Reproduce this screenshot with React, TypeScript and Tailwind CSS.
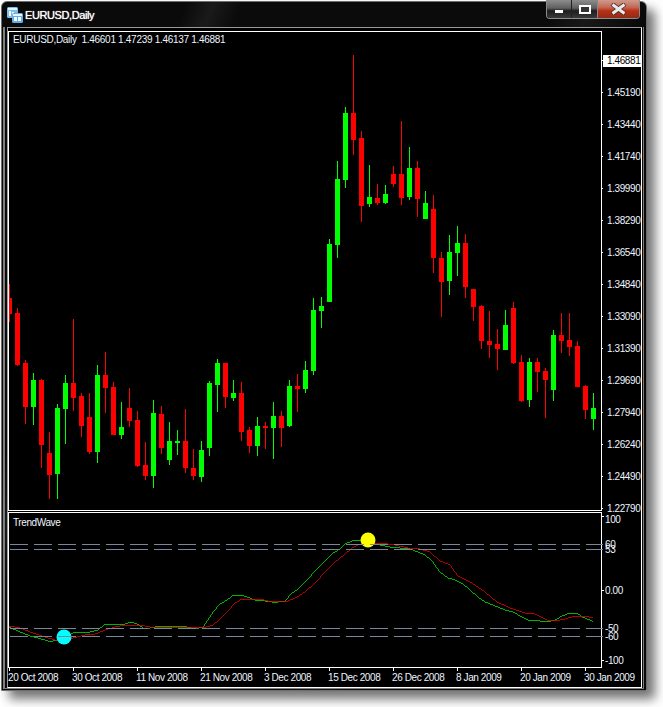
import React from "react";

type C = [number, number, number, number, "r" | "g"];
// high, body top, body bottom, low, colour — one bar every 8px from x=9
const candles: C[] = [
  [284,298,314,322,"r"],[308,313,365,366,"r"],[360,363,407,424,"r"],[373,380,407,425,"g"],[379,380,445,468,"r"],
  [432,453,475,499,"r"],[404,408,474,499,"g"],[375,383,409,444,"g"],[319,383,398,411,"r"],[393,396,426,437,"r"],
  [393,417,452,454,"r"],[365,375,452,463,"g"],[352,375,388,413,"r"],[382,387,435,435,"r"],[402,427,435,439,"g"],
  [388,408,421,427,"r"],[411,420,466,467,"r"],[442,465,476,480,"r"],[400,413,476,488,"g"],[406,414,448,454,"r"],
  [422,441,460,465,"g"],[430,441,443,455,"g"],[409,441,468,473,"r"],[449,468,476,480,"r"],[441,450,477,482,"g"],
  [381,383,448,456,"g"],[359,363,385,412,"g"],[363,363,397,408,"r"],[380,393,398,401,"g"],[382,393,432,441,"r"],
  [427,430,446,453,"r"],[417,426,446,456,"g"],[422,426,428,449,"r"],[402,416,428,459,"g"],[411,416,428,447,"r"],
  [380,386,426,427,"g"],[374,386,389,412,"r"],[361,370,389,393,"g"],[298,310,371,375,"g"],[297,306,311,328,"g"],
  [239,244,302,302,"g"],[161,179,245,258,"g"],[107,113,180,188,"g"],[55,113,140,155,"r"],[131,138,206,222,"r"],
  [165,197,204,207,"g"],[184,198,203,205,"r"],[185,194,203,204,"g"],[166,174,184,187,"r"],[121,174,198,205,"r"],
  [147,168,197,200,"g"],[161,168,199,217,"r"],[191,203,219,219,"g"],[195,209,258,273,"r"],[252,258,282,317,"r"],
  [235,252,281,295,"g"],[226,243,253,276,"g"],[234,243,287,298,"r"],[289,289,307,321,"r"],[305,306,341,349,"r"],
  [311,341,345,358,"r"],[329,344,349,370,"r"],[310,325,350,350,"g"],[302,308,363,364,"r"],[355,362,401,402,"r"],
  [358,362,400,407,"g"],[358,362,372,392,"r"],[368,371,380,418,"r"],[330,335,390,401,"g"],[313,335,341,353,"r"],
  [313,340,347,356,"r"],[341,346,387,387,"r"],[385,386,410,419,"r"],[393,408,419,430,"g"],
];

const prices = ["1.46881","1.45190","1.43440","1.41740","1.39990","1.38290","1.36540","1.34840","1.33090","1.31390","1.29690","1.27940","1.26240","1.24490","1.22790"];
const dates = ["20 Oct 2008","30 Oct 2008","11 Nov 2008","21 Nov 2008","3 Dec 2008","15 Dec 2008","26 Dec 2008","8 Jan 2009","20 Jan 2009","30 Jan 2009"];

const green = "9,627 20,632 30,636 45,640 50,642 60,639 73,633 90,632 98,630 105,624 125,624 130,622 137,624 145,629 155,627 175,626 187,627 195,629 203,627 213,612 220,604 227,600 232,596 240,595 247,597 255,600 265,601 272,602 278,602 285,601 292,593 298,589 307,580 315,571 325,561 333,553 340,549 345,544 352,541 358,540 365,542 380,545 390,547 400,548 410,549 418,552 425,555 432,561 440,572 448,578 455,580 463,584 470,590 478,597 485,602 495,606 505,610 513,612 520,616 528,620 540,621 547,622 555,620 562,616 570,613 577,613 582,617 590,620 593,622";
const red = "9,626 20,628 30,632 45,637 55,640 65,640 73,638 85,635 95,634 105,630 115,627 125,625 140,625 150,627 165,628 175,627 190,627 203,628 213,625 220,619 227,612 235,603 242,599 260,599 268,601 280,602 288,601 297,597 305,592 315,583 325,572 335,562 345,554 352,548 358,545 366,543 380,543 395,545 408,548 420,549 430,552 440,561 450,565 458,576 470,582 485,592 497,602 510,608 525,613 535,614 547,620 555,621 565,619 575,616 585,616 593,618";

const levels: [string, number, boolean][] = [
  ["100", 519, true],["60", 544, false],["53", 549, false],["0.00", 590, true],["-50", 628, false],["-60", 636, false],["-100", 660, true],
];

function AppIcon() {
  return (
    <svg width="16" height="16" viewBox="0 0 16 16" className="shrink-0">
      <rect x="0" y="0" width="11" height="11" rx="1.5" fill="#7cc0f2" />
      <rect x="1" y="1" width="9" height="2" fill="#e3f3ff" />
      <rect x="2" y="4" width="2" height="5" fill="#ffffff" />
      <rect x="5" y="5" width="2" height="4" fill="#ffffff" />
      <rect x="5" y="6" width="11" height="10" rx="1.5" fill="#5eaeee" />
      <rect x="6" y="7" width="9" height="2" fill="#eaf6ff" />
      <rect x="7" y="10" width="3" height="4" fill="#ffffff" />
      <rect x="11" y="10" width="3" height="4" fill="#ffffff" />
    </svg>
  );
}

function PricePanel() {
  return (
    <svg width="592" height="478" viewBox="9 32 592 478" shapeRendering="crispEdges" className="block">
      {candles.map(([hi, top, bot, lo, col], i) => {
        const cx = 9 + i * 8;
        const fill = col === "g" ? "#00ff00" : "#ff0000";
        return (
          <g key={i} fill={fill}>
            <rect x={cx} y={hi} width="1" height={lo - hi} />
            <rect x={cx - 2} y={top} width="5" height={bot - top} />
          </g>
        );
      })}
    </svg>
  );
}

function WavePanel() {
  const dash = "18 6";
  return (
    <svg width="592" height="154" viewBox="9 513 592 154" className="block overflow-visible">
      <g fill="none" strokeWidth="0.7" shapeRendering="crispEdges">
        <polyline points={green} stroke="#00ff00" />
        <polyline points={red} stroke="#ff0000" />
      </g>
      <circle cx="64" cy="637" r="7.5" fill="#00ffff" />
      <circle cx="368" cy="540" r="7.5" fill="#ffff00" />
      <g stroke="#77889a" strokeWidth="1" strokeDasharray={dash} shapeRendering="crispEdges">
        {[544.5, 549.5, 628.5, 636.5].map((y) => (
          <line key={y} x1="10" y1={y} x2="603" y2={y} />
        ))}
      </g>
    </svg>
  );
}

export default function App() {
  return (
    <div className="w-[663px] h-[707px] bg-white overflow-hidden pt-[1px] pl-[1px] font-['Liberation_Sans',Arial,sans-serif] text-[10px] leading-[12px] tracking-[-0.4px] text-[#eef5ff]">
      <div className="w-[646px] h-[690px] flex flex-col rounded-t-[6px] border border-[#6e6e6e] bg-[linear-gradient(112deg,#0a0a0a_0%,#0a0a0a_20%,#1a1a1a_23%,#0b0b0b_26%,#0b0b0b_60%,#181818_64%,#0a0a0a_70%)] pb-[1px] shadow-[8px_8px_11px_rgba(0,0,0,0.55)]">
        {/* title bar */}
        <div className="h-[25px] shrink-0 flex items-start justify-between pl-[5px] pr-[6px]">
          <div className="flex items-center gap-[2px] pt-[5px]">
            <AppIcon />
            <span className="text-[11px] leading-[16px] tracking-[-0.4px] text-white [text-shadow:0_0_1px_#ffffff]">EURUSD,Daily</span>
          </div>
          <div className="flex h-[19px] -mt-[2px] rounded-b-[4px] border border-t-0 border-[#8c8c8c] overflow-hidden">
            <div className="w-[25px] flex items-center justify-center border-r border-[#222] bg-[linear-gradient(180deg,#8d8d8d_0%,#5f5f5f_45%,#1e1e1e_60%,#3a3a3a_100%)]">
              <div className="w-[8px] h-[3px] mt-[5px] bg-white" />
            </div>
            <div className="w-[26px] flex items-center justify-center border-r border-[#888] bg-[linear-gradient(180deg,#8d8d8d_0%,#5f5f5f_45%,#1e1e1e_60%,#3a3a3a_100%)]">
              <div className="w-[12px] h-[9px] border-2 border-white bg-[#333]" />
            </div>
            <div className="w-[41px] flex items-center justify-center bg-[linear-gradient(180deg,#cf9a8c_0%,#c26a56_40%,#bb2f14_60%,#8f2c1a_100%)]">
              <svg width="17" height="12" viewBox="0 0 17 12">
                <path d="M2 1 L15 11 M15 1 L2 11" stroke="#4a2a24" strokeWidth="4.6" fill="none" />
                <path d="M2.5 1.5 L14.5 10.5 M14.5 1.5 L2.5 10.5" stroke="#e8e8e8" strokeWidth="3" fill="none" />
              </svg>
            </div>
          </div>
        </div>
        {/* frame */}
        <div className="flex-1 min-h-0 ml-[1px] mr-[2px] border-l-2 border-r border-b border-[#7f7f7f] pl-[2px] pr-[1px]">
          <div className="h-full border border-[#9a9a9a] border-r-white border-b-white bg-black pt-[3px]">
            {/* main row */}
            <div className="flex h-[480px]">
              <div className="relative w-[594px] h-[480px] shrink-0 border border-white">
                <PricePanel />
                <div className="absolute left-[4px] top-[2px] whitespace-pre tracking-[-0.3px]">
                  {"EURUSD,Daily  "}
                  <span>1.46601 1.47239 1.46137 1.46881</span>
                </div>
              </div>
              <div className="pt-[13px] w-[39px] shrink-0">
                {prices.map((p, i) => (
                  <div key={p} className="flex h-[32px]">
                    <div className="w-[1px] h-[1px] mt-[16px] bg-white" />
                    {i === 0 ? (
                      <div className="w-[38px] h-[12px] mt-[11px] bg-white text-black pl-[4px]">{p}</div>
                    ) : (
                      <div className="h-[12px] mt-[11px] pl-[3px] ml-[1px]">{p}</div>
                    )}
                  </div>
                ))}
              </div>
            </div>
            {/* indicator row */}
            <div className="flex mt-[1px] h-[156px]">
              <div className="relative w-[594px] h-[156px] shrink-0 border border-white">
                <WavePanel />
                <div className="absolute left-[4px] top-[4px]">TrendWave</div>
              </div>
              <div className="relative w-[39px] shrink-0">
                {levels.map(([t, y, tick]) => (
                  <React.Fragment key={t}>
                    {tick && <div className="absolute left-0 w-[2px] h-[1px] bg-white" style={{ top: (t === "100" ? 516 : y) - 512 }} />}
                    <div className="absolute left-[3px]" style={{ top: y - 512 - 5 }}>{t}</div>
                  </React.Fragment>
                ))}
              </div>
            </div>
            {/* date row */}
            <div className="flex">
              {dates.map((d) => (
                <div key={d} className="w-[64px] shrink-0 whitespace-nowrap">
                  <div className="w-[1px] h-[3px] ml-[1px] bg-white" />
                  <div className="mt-[1px]">{d}</div>
                </div>
              ))}
            </div>
          </div>
        </div>
      </div>
    </div>
  );
}
